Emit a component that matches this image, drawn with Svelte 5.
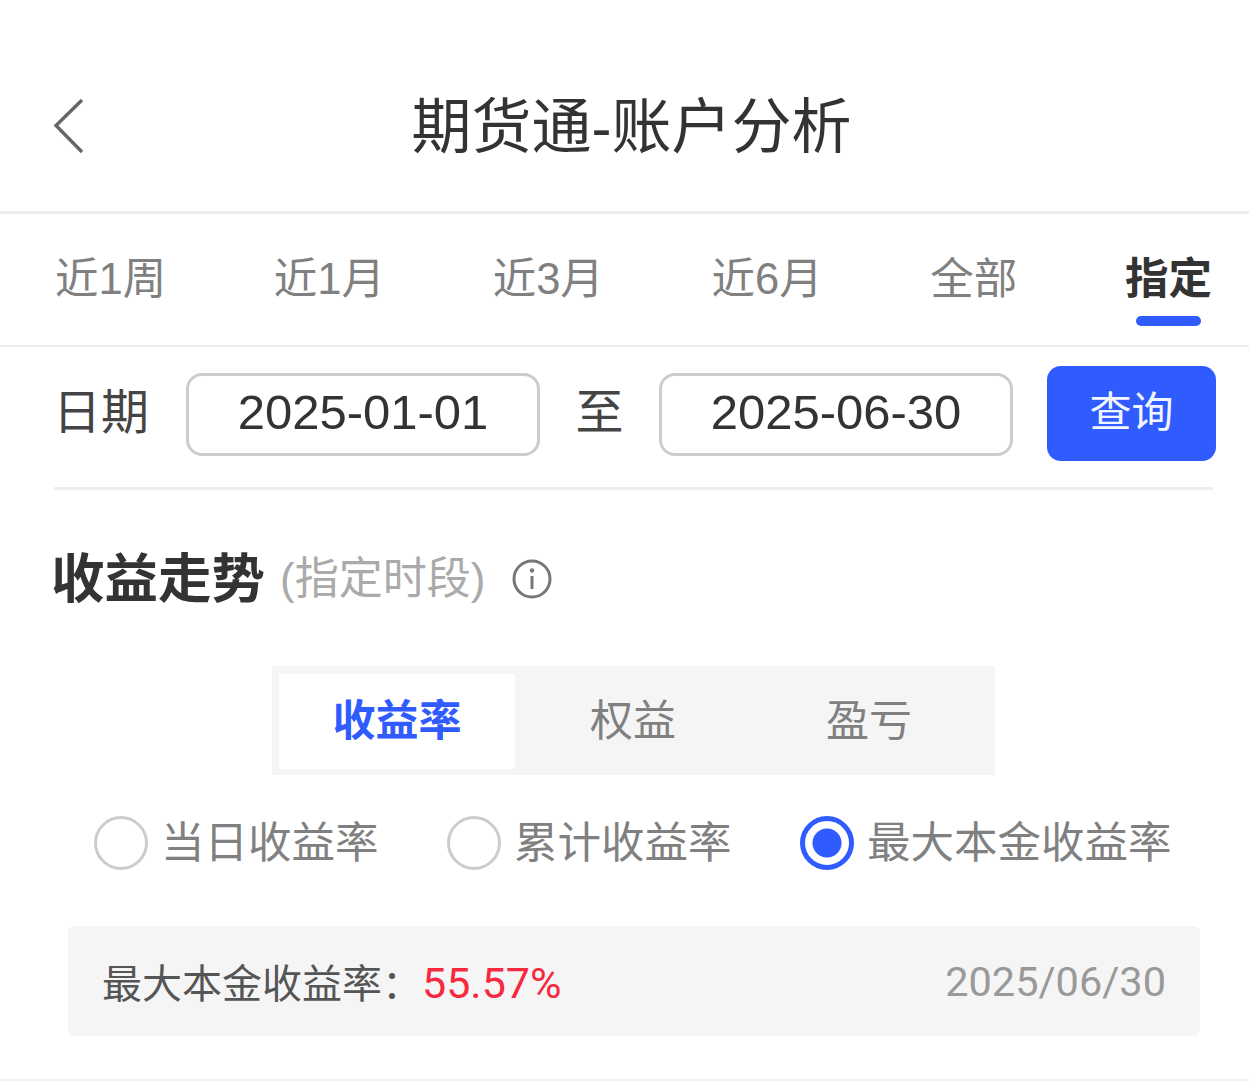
<script>
  let ranges = ["近1周", "近1月", "近3月", "近6月", "全部", "指定"];
  let range = "指定";
  let segments = ["收益率", "权益", "盈亏"];
  let segment = "收益率";
  let kinds = ["当日收益率", "累计收益率", "最大本金收益率"];
  let kind = "最大本金收益率";
</script>

<div class="page">
  <header class="nav">
    <button class="back" aria-label="返回">
      <svg width="34" height="58" viewBox="0 0 34 58">
        <path d="M30 3 L4 28.5 L30 55" fill="none" stroke="#666" stroke-width="3.4" />
      </svg>
    </button>
    <h1>期货通-账户分析</h1>
  </header>

  <nav class="ranges">
    {#each ranges as r}
      <button class="range" class:active={r === range} on:click={() => (range = r)}>{r}</button>
    {/each}
  </nav>

  <div class="dates">
    <span class="dates__label">日期</span>
    <div class="date">2025-01-01</div>
    <span class="dates__to">至</span>
    <div class="date">2025-06-30</div>
    <button class="query">查询</button>
  </div>

  <section class="trend">
    <div class="trend__head">
      <h2>收益走势</h2>
      <span class="trend__sub">(指定时段)</span>
      <svg class="info" width="40" height="40" viewBox="0 0 40 40">
        <circle cx="20" cy="20" r="18" fill="none" stroke="#777" stroke-width="3" />
        <circle cx="20" cy="11.5" r="2.2" fill="#777" />
        <path d="M20 17 V30" stroke="#777" stroke-width="3" />
      </svg>
    </div>

    <div class="segments">
      {#each segments as s}
        <button class="segment" class:active={s === segment} on:click={() => (segment = s)}>{s}</button>
      {/each}
    </div>

    <div class="kinds">
      {#each kinds as k}
        <button class="kind" class:active={k === kind} on:click={() => (kind = k)}>
          <span class="radio"></span>{k}
        </button>
      {/each}
    </div>

    <div class="stat">
      <div>
        <span class="stat__label">最大本金收益率：</span><span class="stat__value">55.57%</span>
      </div>
      <span class="stat__date">2025/06/30</span>
    </div>
  </section>
</div>

<style>
  :global(body) {
    background: #fff;
  }

  * {
    box-sizing: border-box;
    margin: 0;
  }

  button {
    font: inherit;
    background: none;
    border: none;
    padding: 0;
  }

  .page {
    width: 1249px;
    height: 1081px;
    overflow: hidden;
    border-bottom: 2px solid #f0f0f0;
    font-family: "Liberation Sans", "Noto Sans CJK SC", sans-serif;
    color: #333;
  }

  .nav {
    height: 214px;
    border-bottom: 3px solid #eeeeee;
    display: flex;
    align-items: center;
    justify-content: center;
    padding-top: 44px;
    padding-left: 14px;
    position: relative;
  }

  .nav h1 {
    font-size: 60px;
    font-weight: 400;
    color: #333;
    line-height: 1;
  }

  .back {
    position: absolute;
    left: 52px;
    top: 97px;
    height: 58px;
  }

  .ranges {
    height: 133px;
    border-bottom: 2px solid #eeeeee;
    padding: 39px 37px 0 55px;
    display: flex;
    justify-content: space-between;
    align-items: flex-start;
  }

  .range {
    font-size: 43.5px;
    line-height: 52px;
    color: #808080;
    position: relative;
  }

  .range.active {
    color: #333;
    font-weight: 700;
  }

  .range.active::after {
    content: "";
    position: absolute;
    left: 11px;
    right: 11px;
    top: 63px;
    height: 10px;
    border-radius: 5px;
    background: #2f5bff;
  }

  .dates {
    margin: 0 36px 0 54px;
    height: 143px;
    border-bottom: 3px solid #eeeeee;
    display: flex;
    align-items: flex-start;
    padding-top: 19px;
  }

  .dates__label {
    font-size: 48px;
    line-height: 94px;
    width: 132px;
    margin-left: -1px;
    margin-right: 1px;
    color: #444;
  }

  .date {
    width: 354px;
    height: 83px;
    margin-top: 7px;
    border: 3px solid #cccccc;
    border-radius: 16px;
    text-align: center;
    font-size: 49px;
    line-height: 73px;
    color: #333;
  }

  .dates__to {
    font-size: 48px;
    line-height: 94px;
    width: 119px;
    text-align: center;
    color: #444;
  }

  .query {
    margin-left: 34px;
    margin-right: -3px;
    width: 169px;
    height: 95px;
    padding-bottom: 10px;
    border-radius: 14px;
    background: #2f5bff;
    color: #f2f5ff;
    font-size: 42px;
  }

  .trend {
    padding: 0 49px 0 52px;
  }

  .trend__head {
    display: flex;
    align-items: center;
    height: 60px;
    margin-top: 59px;
  }

  .trend__head h2 {
    font-size: 53.5px;
    font-weight: 700;
    line-height: 60px;
    margin-left: -1px;
    padding-top: 2px;
    color: #333;
  }

  .trend__sub {
    margin-left: 15px;
    margin-top: -8px;
    font-size: 44px;
    color: #aaaaaa;
  }

  .info {
    margin-left: 27px;
  }

  .segments {
    margin: 57px 0 0 220px;
    width: 723px;
    height: 109px;
    padding: 8px 0 6px 7px;
    background: #f5f5f5;
    display: flex;
  }

  .segment {
    width: 236px;
    padding-bottom: 9px;
    font-size: 43px;
    color: #808080;
  }

  .segment.active {
    background: #fff;
    color: #2f5bff;
    font-weight: 700;
  }

  .kinds {
    display: grid;
    grid-template-columns: 353px 353px auto;
    margin: 41px 0 0 42px;
    height: 54px;
  }

  .kind {
    display: flex;
    align-items: center;
    gap: 13px;
    font-size: 43.5px;
    line-height: 50px;
    color: #808080;
    white-space: nowrap;
  }

  .radio {
    width: 54px;
    height: 54px;
    border-radius: 50%;
    border: 3px solid #cccccc;
    flex: none;
  }

  .kind.active .radio {
    border: 5px solid #2f5bff;
    background: radial-gradient(circle, #2f5bff 0 14px, #fff 15px);
  }

  .stat {
    margin: 56px 0 0 16px;
    height: 110px;
    width: 1132px;
    border-radius: 6px;
    background: #f5f5f5;
    padding: 0 34px;
    display: flex;
    align-items: center;
    justify-content: space-between;
  }

  .stat__label {
    font-size: 40px;
    color: #555;
  }

  .stat__value {
    font-size: 43px;
    color: #f5293f;
    font-family: Roboto, "Liberation Sans", sans-serif;
  }

  .stat__date {
    font-size: 41.5px;
    color: #999;
    font-family: Roboto, "Liberation Sans", sans-serif;
  }
</style>
